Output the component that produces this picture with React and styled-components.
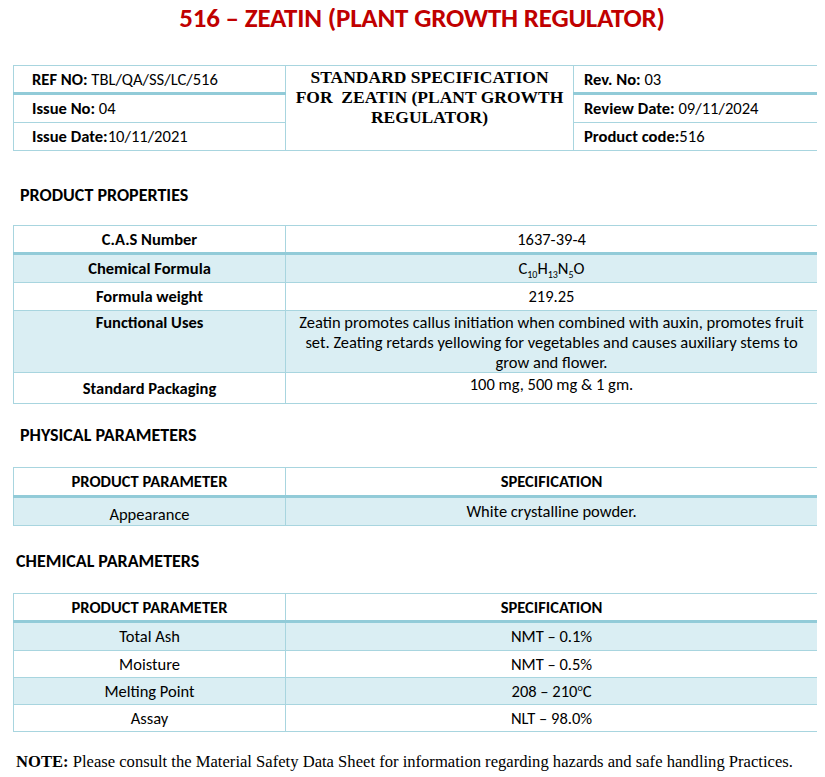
import React from "react";
import styled, { createGlobalStyle } from "styled-components";

const GlobalStyle = createGlobalStyle`
  html, body { margin: 0; padding: 0; background: #ffffff; }
  body { margin: 8px; font-family: Carlito, Lato, "Liberation Sans", sans-serif; color: #000; }
  * { box-sizing: border-box; }
`;

const Page = styled.div`
  width: 809px;
  padding-left: 5px;
  display: flex;
  flex-direction: column;
`;

const Title = styled.h1`
  margin: 0;
  padding: 0 0 0 14px;
  height: 22px;
  line-height: 20px;
  text-align: center;
  color: #c00000;
  font-size: 27px;
  font-weight: 700;
  letter-spacing: -0.2px;
  white-space: nowrap;
`;

const Table = styled.table`
  width: 805px;
  border-collapse: collapse;
  table-layout: fixed;
  margin-top: ${(p) => p.$top || 0}px;
`;

const Row = styled.tr`
  height: ${(p) => p.$h || 28}px;
  background: ${(p) => (p.$shade ? "#daeef3" : "#ffffff")};
`;

const Cell = styled.td`
  border: 1px solid #a8d5df;
  border-bottom: ${(p) => (p.$thick ? "3px solid #92cbd8" : "1px solid #a8d5df")};
  padding: ${(p) => (p.$top ? "1px 8px 0" : "0 8px 1px")};
  font-size: 16.5px;
  line-height: 20px;
  text-align: center;
  vertical-align: ${(p) => (p.$top ? "top" : "middle")};
  font-weight: ${(p) => (p.$bold ? 700 : 400)};
`;

const MetaCell = styled(Cell)`
  padding: 0 0 1px ${(p) => p.$indent || 18}px;
  text-align: left;
  font-size: 16.6px;
  white-space: nowrap;
`;

const TitleCell = styled.td`
  border: 1px solid #a8d5df;
  padding: 1px 6px 0;
  vertical-align: top;
  text-align: center;
  font-family: "Liberation Serif", "Times New Roman", serif;
  font-weight: 700;
  font-size: 17.5px;
  line-height: 20px;
`;

const B = styled.b`
  font-weight: 700;
`;

const Heading = styled.h2`
  margin: ${(p) => p.$mt}px 0 0 ${(p) => p.$ml || 7}px;
  font-size: 18px;
  font-weight: 700;
  line-height: 20px;
  height: 20px;
`;

const Note = styled.p`
  margin: 20px 0 0 3px;
  font-family: "Liberation Serif", "Times New Roman", serif;
  font-size: 16.6px;
  line-height: 20px;
  white-space: nowrap;
`;

const Sup = styled.sup`
  font-size: 10px;
  line-height: 0;
`;
const Sub = styled.sub`
  font-size: 10px;
  line-height: 0;
`;

const properties = [
  { k: "C.A.S Number", v: "1637-39-4", h: 28, thick: true },
  {
    k: "Chemical Formula",
    v: (
      <>
        C<Sub>10</Sub>H<Sub>13</Sub>N<Sub>5</Sub>O
      </>
    ),
    h: 29,
    shade: true,
  },
  { k: "Formula weight", v: "219.25", h: 28 },
  {
    k: "Functional Uses",
    v: "Zeatin promotes callus initiation when combined with auxin, promotes fruit set. Zeating retards yellowing for vegetables and causes auxiliary stems to grow and flower.",
    h: 62,
    shade: true,
    top: true,
  },
  { k: "Standard Packaging", v: "100 mg, 500 mg & 1 gm.", h: 31, topRight: true },
];

const chemical = [
  { k: "Total Ash", v: "NMT – 0.1%" },
  { k: "Moisture", v: "NMT – 0.5%" },
  {
    k: "Melting Point",
    v: (
      <>
        208 – 210<Sup>o</Sup>C
      </>
    ),
  },
  { k: "Assay", v: "NLT – 98.0%" },
];

function Cols() {
  return (
    <colgroup>
      <col style={{ width: 272 }} />
      <col />
    </colgroup>
  );
}

export default function App() {
  return (
    <>
      <GlobalStyle />
      <Page>
        <Title>516 – ZEATIN (PLANT GROWTH REGULATOR)</Title>

        <Table $top={35}>
          <colgroup>
            <col style={{ width: 272 }} />
            <col style={{ width: 288 }} />
            <col />
          </colgroup>
          <tbody>
            <Row $h={28}>
              <MetaCell $thick>
                <B>REF NO:</B> TBL/QA/SS/LC/516
              </MetaCell>
              <TitleCell rowSpan={3}>
                STANDARD SPECIFICATION FOR&nbsp; ZEATIN (PLANT GROWTH REGULATOR)
              </TitleCell>
              <MetaCell $thick $indent={10}>
                <B>Rev. No:</B> 03
              </MetaCell>
            </Row>
            <Row $h={29}>
              <MetaCell>
                <B>Issue No:</B> 04
              </MetaCell>
              <MetaCell $indent={10}>
                <B>Review Date:</B> 09/11/2024
              </MetaCell>
            </Row>
            <Row $h={28}>
              <MetaCell>
                <B>Issue Date:</B>10/11/2021
              </MetaCell>
              <MetaCell $indent={10}>
                <B>Product code:</B>516
              </MetaCell>
            </Row>
          </tbody>
        </Table>

        <Heading $mt={34}>PRODUCT PROPERTIES</Heading>
        <Table $top={20}>
          <Cols />
          <tbody>
            {properties.map((r) => (
              <Row key={r.k} $h={r.h} $shade={r.shade}>
                <Cell $bold $thick={r.thick} $top={r.top}>
                  {r.k}
                </Cell>
                <Cell $thick={r.thick} $top={r.top || r.topRight}>
                  {r.v}
                </Cell>
              </Row>
            ))}
          </tbody>
        </Table>

        <Heading $mt={21}>PHYSICAL PARAMETERS</Heading>
        <Table $top={22}>
          <Cols />
          <tbody>
            <Row $h={29}>
              <Cell $bold $thick>PRODUCT PARAMETER</Cell>
              <Cell $bold $thick>SPECIFICATION</Cell>
            </Row>
            <Row $h={29} $shade>
              <Cell style={{ paddingTop: 5 }}>Appearance</Cell>
              <Cell>White crystalline powder.</Cell>
            </Row>
          </tbody>
        </Table>

        <Heading $mt={25} $ml={3}>CHEMICAL PARAMETERS</Heading>
        <Table $top={22}>
          <Cols />
          <tbody>
            <Row $h={28}>
              <Cell $bold $thick>PRODUCT PARAMETER</Cell>
              <Cell $bold $thick>SPECIFICATION</Cell>
            </Row>
            {chemical.map((r, i) => (
              <Row key={r.k} $h={i === 0 ? 29 : 27} $shade={i % 2 === 0}>
                <Cell>{r.k}</Cell>
                <Cell>{r.v}</Cell>
              </Row>
            ))}
          </tbody>
        </Table>

        <Note>
          <B>NOTE:</B> Please consult the Material Safety Data Sheet for information regarding hazards and safe handling Practices.
        </Note>
      </Page>
    </>
  );
}
